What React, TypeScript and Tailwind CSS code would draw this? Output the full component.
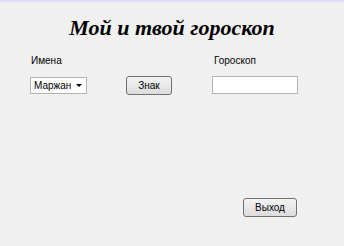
import React from 'react';

const App = () => {
  return (
    <div className="w-[344px] h-[246px] bg-[#f0f0f0] border-t-2 border-[#dedcf6] flex flex-col text-[10px] text-black font-['Liberation_Sans',sans-serif]">
      {/* заголовок */}
      <div className="pt-[14px] h-[52px] text-center font-['Liberation_Serif',serif] font-bold italic text-[22px] leading-[24px]">
        Мой и твой гороскоп
      </div>

      <div className="flex pl-[31px] h-[22px] leading-[13px]">
        <span className="w-[183px]">Имена</span>
        <span>Гороскоп</span>
      </div>

      <div className="flex items-start pl-[30px]">
        <div className="mt-[1px] w-[57px] h-[17px] bg-white border border-[#b4b4b4] flex items-center pl-[3px]">
          <span className="leading-[13px]">Маржан</span>
          <span className="ml-[5px] w-0 h-0 border-l-[3px] border-r-[3px] border-t-[3px] border-l-transparent border-r-transparent border-t-black"></span>
        </div>
        <button className="ml-[39px] w-[46px] h-[19px] border border-[#707070] rounded-[3px] bg-gradient-to-b from-[#f4f4f4] to-[#dcdcdc] leading-[13px]">
          Знак
        </button>
        <input
          type="text"
          className="ml-[40px] w-[86px] h-[18px] bg-white border border-[#b4b4b4] outline-none"
        />
      </div>

      <div className="flex justify-end pr-[47px] mt-[103px]">
        <button className="w-[54px] h-[19px] border border-[#707070] rounded-[3px] bg-gradient-to-b from-[#f4f4f4] to-[#dcdcdc] leading-[13px]">
          Выход
        </button>
      </div>
    </div>
  );
};

export default App;
